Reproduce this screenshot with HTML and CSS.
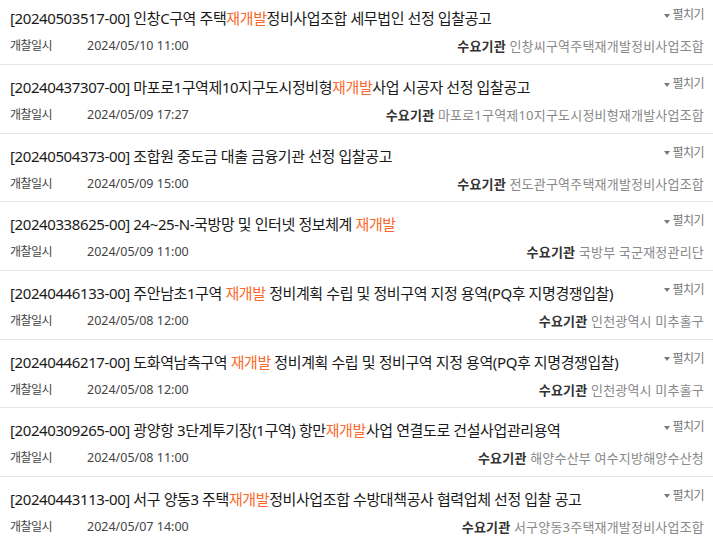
FILE: index.html
```html
<!DOCTYPE html>
<html lang="ko">
<head>
<meta charset="utf-8">
<title>입찰공고 목록</title>
<link rel="stylesheet" href="styles.css">
</head>
<body>
<ul class="list">
  <li class="item">
    <div class="top"><div class="title">[20240503517-00] 인창C구역 주택<em>재개발</em>정비사업조합 세무법인 선정 입찰공고</div><span class="toggle"><i class="tri"></i>펼치기</span></div>
    <div class="meta"><span class="label">개찰일시</span><span class="date">2024/05/10 11:00</span><span class="org"><b>수요기관</b> 인창씨구역주택재개발정비사업조합</span></div>
  </li>
  <li class="item">
    <div class="top"><div class="title">[20240437307-00] 마포로1구역제10지구도시정비형<em>재개발</em>사업 시공자 선정 입찰공고</div><span class="toggle"><i class="tri"></i>펼치기</span></div>
    <div class="meta"><span class="label">개찰일시</span><span class="date">2024/05/09 17:27</span><span class="org"><b>수요기관</b> 마포로1구역제10지구도시정비형재개발사업조합</span></div>
  </li>
  <li class="item">
    <div class="top"><div class="title">[20240504373-00] 조합원 중도금 대출 금융기관 선정 입찰공고</div><span class="toggle"><i class="tri"></i>펼치기</span></div>
    <div class="meta"><span class="label">개찰일시</span><span class="date">2024/05/09 15:00</span><span class="org"><b>수요기관</b> 전도관구역주택재개발정비사업조합</span></div>
  </li>
  <li class="item">
    <div class="top"><div class="title">[20240338625-00] 24~25-N-국방망 및 인터넷 정보체계 <em>재개발</em></div><span class="toggle"><i class="tri"></i>펼치기</span></div>
    <div class="meta"><span class="label">개찰일시</span><span class="date">2024/05/09 11:00</span><span class="org"><b>수요기관</b> 국방부 국군재정관리단</span></div>
  </li>
  <li class="item">
    <div class="top"><div class="title">[20240446133-00] 주안남초1구역 <em>재개발</em> 정비계획 수립 및 정비구역 지정 용역(PQ후 지명경쟁입찰)</div><span class="toggle"><i class="tri"></i>펼치기</span></div>
    <div class="meta"><span class="label">개찰일시</span><span class="date">2024/05/08 12:00</span><span class="org"><b>수요기관</b> 인천광역시 미추홀구</span></div>
  </li>
  <li class="item">
    <div class="top"><div class="title">[20240446217-00] 도화역남측구역 <em>재개발</em> 정비계획 수립 및 정비구역 지정 용역(PQ후 지명경쟁입찰)</div><span class="toggle"><i class="tri"></i>펼치기</span></div>
    <div class="meta"><span class="label">개찰일시</span><span class="date">2024/05/08 12:00</span><span class="org"><b>수요기관</b> 인천광역시 미추홀구</span></div>
  </li>
  <li class="item">
    <div class="top"><div class="title">[20240309265-00] 광양항 3단계투기장(1구역) 항만<em>재개발</em>사업 연결도로 건설사업관리용역</div><span class="toggle"><i class="tri"></i>펼치기</span></div>
    <div class="meta"><span class="label">개찰일시</span><span class="date">2024/05/08 11:00</span><span class="org"><b>수요기관</b> 해양수산부 여수지방해양수산청</span></div>
  </li>
  <li class="item">
    <div class="top"><div class="title">[20240443113-00] 서구 양동3 주택<em>재개발</em>정비사업조합 수방대책공사 협력업체 선정 입찰 공고</div><span class="toggle"><i class="tri"></i>펼치기</span></div>
    <div class="meta"><span class="label">개찰일시</span><span class="date">2024/05/07 14:00</span><span class="org"><b>수요기관</b> 서구양동3주택재개발정비사업조합</span></div>
  </li>
</ul>
</body>
</html>
```

FILE: styles.css
```css
html, body {
  margin: 0;
  padding: 0;
  background: #fff;
}
body {
  font-family: "Noto Sans", "Noto Sans CJK KR", sans-serif;
  color: #222;
  overflow: hidden;
}
.list {
  list-style: none;
  margin: -3.67px 0 0 0;
  padding: 0;
}
.item {
  box-sizing: border-box;
  height: 68.67px;
  padding: 12px 9px 0 10px;
  border-bottom: 1px solid #e6e6e6;
}
.top {
  display: flex;
  align-items: flex-start;
  justify-content: space-between;
}
.title {
  font-size: 15px;
  line-height: 21px;
  letter-spacing: -0.4px;
  color: #1a1a1a;
  white-space: nowrap;
}
.title em {
  font-style: normal;
  color: #fb6a2c;
}
.toggle {
  display: flex;
  align-items: center;
  gap: 2px;
  margin-top: -1px;
  font-size: 12px;
  line-height: 16px;
  letter-spacing: -0.5px;
  color: #777;
  white-space: nowrap;
}
.tri {
  display: block;
  width: 0;
  height: 0;
  border-left: 3px solid transparent;
  border-right: 3px solid transparent;
  border-top: 4px solid #777;
  margin-top: 1px;
}
.meta {
  display: flex;
  align-items: center;
  margin-top: 8px;
  font-size: 12px;
  line-height: 18px;
}
.label {
  width: 77px;
  color: #444;
  letter-spacing: -0.5px;
}
.date {
  color: #444;
  font-size: 12.5px;
}
.org {
  margin-left: auto;
  font-size: 13px;
  color: #888;
  letter-spacing: 0.2px;
  white-space: nowrap;
}
.org b {
  color: #333;
  font-weight: 700;
}
```
